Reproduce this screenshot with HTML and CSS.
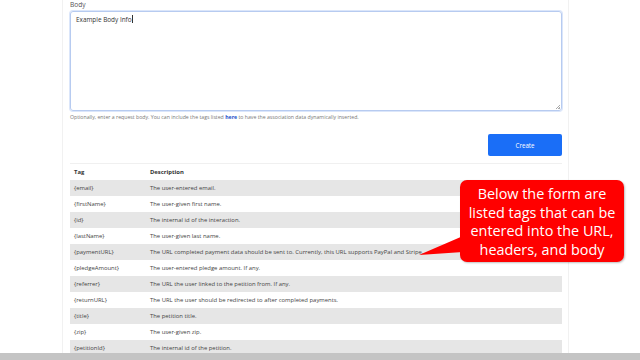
FILE: index.html
```html
<!DOCTYPE html>
<html>
<head>
<meta charset="utf-8">
<link rel="stylesheet" href="styles.css">
</head>
<body>
<div class="page">
  <main class="panel">
    <label class="label">Body</label>
    <div class="textarea"><span class="value">Example Body Info</span><span class="caret"></span><span class="grip"></span></div>
    <p class="help">Optionally, enter a request body. You can include the tags listed <a href="#">here</a> to have the association data dynamically inserted.</p>
    <div class="actions"><button class="btn">Create</button></div>
    <table class="tags">
      <thead><tr><th class="c1">Tag</th><th>Description</th></tr></thead>
      <tbody>
        <tr><td>{email}</td><td>The user-entered email.</td></tr>
        <tr><td>{firstName}</td><td>The user-given first name.</td></tr>
        <tr><td>{id}</td><td>The internal id of the interaction.</td></tr>
        <tr><td>{lastName}</td><td>The user-given last name.</td></tr>
        <tr><td>{paymentURL}</td><td>The URL completed payment data should be sent to. Currently, this URL supports PayPal and Stripe.</td></tr>
        <tr><td>{pledgeAmount}</td><td>The user-entered pledge amount. If any.</td></tr>
        <tr><td>{referrer}</td><td>The URL the user linked to the petition from. If any.</td></tr>
        <tr><td>{returnURL}</td><td>The URL the user should be redirected to after completed payments.</td></tr>
        <tr><td>{title}</td><td>The petition title.</td></tr>
        <tr><td>{zip}</td><td>The user-given zip.</td></tr>
        <tr><td>{petitionId}</td><td>The internal id of the petition.</td></tr>
      </tbody>
    </table>
  </main>
  <div class="callout">
    <svg class="tail" width="50" height="24" viewBox="0 0 50 24"><polygon points="44,0 0,19 44,16" fill="#f00"/></svg>
    Below the form are listed tags that can be entered into the URL, headers, and body
  </div>
  <div class="bar"></div>
</div>
</body>
</html>
```
FILE: styles.css
```css
html, body { margin: 0; padding: 0; background: #fff; }
body { font-family: "Open Sans", "Noto Sans", sans-serif; color: #444; }
.page { position: relative; width: 640px; height: 360px; overflow: hidden; }
.panel {
  margin-left: 62px; width: 492px; height: 360px;
  padding: 0 6px 0 7px;
  border-left: 1px solid #f1f1f1; border-right: 1px solid #f1f1f1;
}
.label { display: block; font-size: 6.6px; line-height: 9px; color: #555; }
.textarea {
  position: relative; margin-top: 2px; height: 96px;
  border: 1px solid #b7cbf0; border-radius: 3px;
  box-shadow: 0 0 0 1px #dbe6fa;
  padding: 1px 5px; font-size: 6.4px; line-height: 14px; color: #333;
}
.caret { display: inline-block; width: 1px; height: 8px; background: #333; vertical-align: -1px; }
.grip { position: absolute; right: 1px; bottom: 1px; width: 4px; height: 4px;
  background: linear-gradient(135deg, transparent 50%, #aaa 50%, #aaa 60%, transparent 60%, transparent 75%, #aaa 75%); }
.help { margin: 2px 0 0; font-size: 5.2px; line-height: 8px; color: #777; }
.help a { color: #1a4fc9; font-weight: 700; text-decoration: none; }
.actions { display: flex; justify-content: flex-end; margin-top: 13px; }
.btn {
  width: 74px; height: 22px; border: 0; border-radius: 2px;
  background: #1a6ef7; color: #fff; font-family: inherit; font-size: 6.2px; padding: 0;
}
.tags { margin-top: 7px; width: 100%; border-collapse: collapse; border-top: 1px solid #f0f0f0; font-size: 5.9px; }
.tags th { text-align: left; font-weight: 700; color: #333; height: 16px; padding: 0 4px; }
.tags th.c1 { width: 68px; }
.tags td { height: 16px; padding: 0 4px; color: #444; white-space: nowrap; }
.tags tbody tr:nth-child(odd) td { background: #e6e6e6; }
.callout {
  position: absolute; left: 460px; top: 180px; width: 164px; height: 82px;
  box-sizing: border-box; padding: 5px 4px 0;
  background: #f00; border-radius: 7px; color: #fff;
  font-family: "Open Sans", sans-serif; font-size: 14.4px; line-height: 18.5px; text-align: center;
  box-shadow: 1px 1px 2px rgba(0,0,0,0.25);
}
.tail { position: absolute; left: -41px; top: 56px; }
.bar { position: absolute; left: 0; right: 0; bottom: 0; height: 7px; background: #c4c4c4; }
```
